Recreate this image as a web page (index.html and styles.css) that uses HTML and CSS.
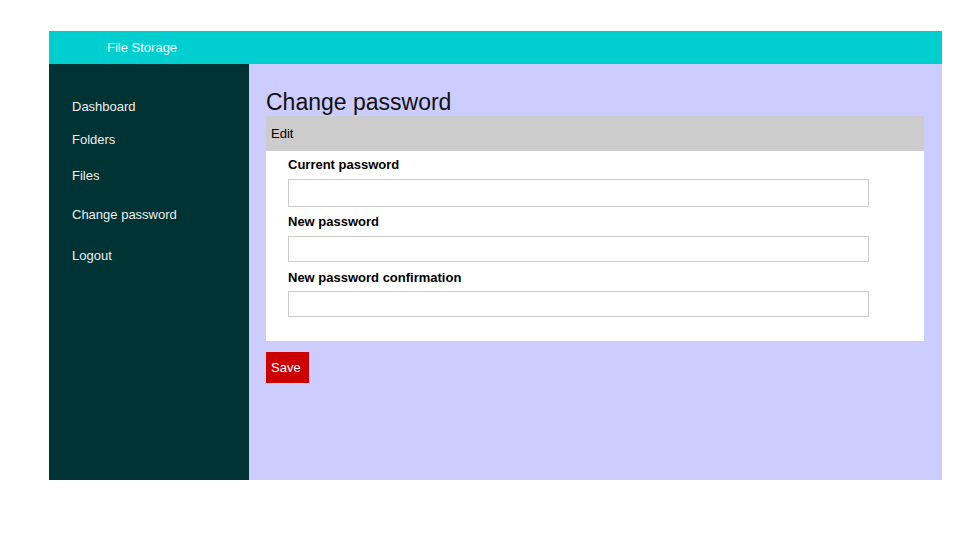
FILE: index.html
```html
<!DOCTYPE html>
<html lang="en">
<head>
<meta charset="utf-8">
<title>Change password</title>
<link rel="stylesheet" href="styles.css">
</head>
<body>
<div class="app">
  <header class="topbar"><span class="brand">File Storage</span></header>
  <div class="layout">
    <nav class="sidebar">
      <a class="nav-item nav-dashboard" href="#">Dashboard</a>
      <a class="nav-item nav-folders" href="#">Folders</a>
      <a class="nav-item nav-files" href="#">Files</a>
      <a class="nav-item nav-change" href="#">Change password</a>
      <a class="nav-item nav-logout" href="#">Logout</a>
    </nav>
    <main class="content">
      <h1 class="title">Change password</h1>
      <section class="card">
        <div class="card-header">Edit</div>
        <form class="card-body">
          <label class="field-label first">Current password</label>
          <input class="field-input tall" type="password">
          <label class="field-label">New password</label>
          <input class="field-input" type="password">
          <label class="field-label last">New password confirmation</label>
          <input class="field-input" type="password">
        </form>
      </section>
      <button class="save-btn" type="button">Save</button>
    </main>
  </div>
</div>
</body>
</html>
```

FILE: styles.css
```css
* { box-sizing: border-box; }
html, body { margin: 0; padding: 0; background: #ffffff; }
body {
  font-family: "Liberation Sans", Arial, sans-serif;
  font-size: 13px;
  color: #000;
}
.app {
  margin: 31px 0 0 49px;
  width: 893px;
  height: 449px;
  display: flex;
  flex-direction: column;
}
.topbar {
  height: 33px;
  background: #00cecf;
  display: flex;
  align-items: center;
  padding-left: 58px;
}
.brand { color: #f4ffff; font-size: 13px; line-height: 15px; }
.layout { flex: 1; display: flex; }
.sidebar {
  width: 200px;
  background: #003333;
  display: flex;
  flex-direction: column;
  padding: 35px 0 0 23px;
}
.nav-item {
  color: #eeeeee;
  text-decoration: none;
  font-size: 13px;
  line-height: 15px;
}
.nav-folders { margin-top: 18px; }
.nav-files { margin-top: 21px; }
.nav-change { margin-top: 24px; }
.nav-logout { margin-top: 26px; }
.content {
  flex: 1;
  background: #ccccff;
  padding: 24px 18px 0 17px;
}
.title {
  margin: 0;
  font-size: 23px;
  font-weight: normal;
  line-height: 28px;
  color: #111;
}
.card { background: #ffffff; }
.card-header {
  height: 35px;
  background: #cccccc;
  padding-left: 5px;
  display: flex;
  align-items: center;
  font-size: 13px;
}
.card-body {
  margin: 0;
  padding: 0 0 24px 22px;
  display: flex;
  flex-direction: column;
  align-items: flex-start;
}
.field-label {
  display: block;
  font-weight: bold;
  font-size: 13px;
  line-height: 15px;
  margin: 7px 0 7px;
}
.field-label.first { margin-top: 6px; }
.field-label.last { margin-top: 8px; margin-bottom: 6px; }
.field-input {
  width: 581px;
  height: 26px;
  border: 1px solid #cccccc;
  background: #fff;
  margin: 0;
  padding: 0 4px;
}
.field-input.tall { height: 28px; }
.save-btn {
  margin-top: 11px;
  width: 43px;
  height: 31px;
  background: #cc0000;
  color: #ffffff;
  border: none;
  padding: 0 0 0 5px;
  text-align: left;
  font-family: "Liberation Sans", Arial, sans-serif;
  font-size: 13px;
}
```
